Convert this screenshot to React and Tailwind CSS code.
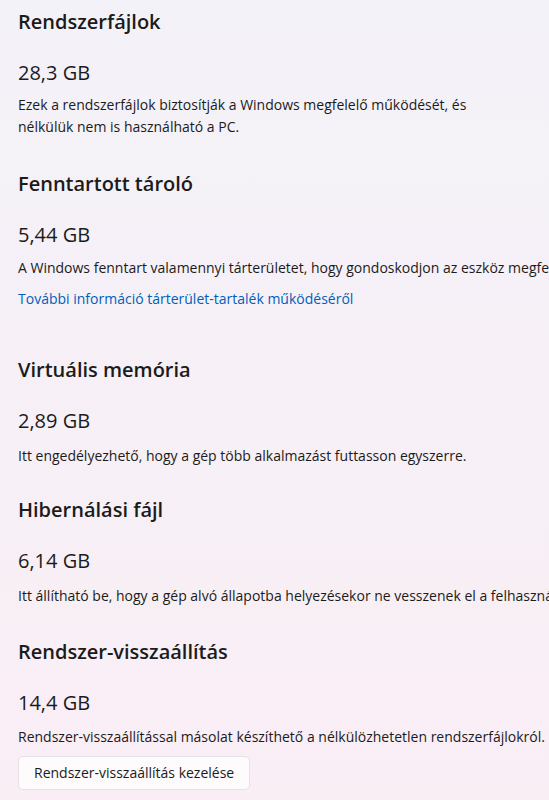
const font = { fontFamily: '"Open Sans", "Noto Sans", sans-serif' };

const Section = ({ title, size, children, className = "", gap = "mt-[7px]" }) => (
  <section className={className}>
    <h2 className="text-[20px] font-semibold leading-[28px] text-[#1b1b1b]">
      {title}
    </h2>
    <p className="mt-[23px] text-[20px] leading-[28px] text-[#1b1b1b]">{size}</p>
    <div className={`${gap} text-[14px] leading-[22px] text-[#1b1b1b]`}>
      {children}
    </div>
  </section>
);

const App = () => {
  return (
    <div
      className="w-[549px] h-[800px] overflow-hidden bg-gradient-to-b from-[#f3f2f8] to-[#faeef5] pl-[18px]"
      style={font}
    >
      <div className="pt-[8px] whitespace-nowrap">
        <Section title="Rendszerfájlok" size="28,3 GB">
          <p>
            Ezek a rendszerfájlok biztosítják a Windows megfelelő működését, és
            <br />
            nélkülük nem is használható a PC.
          </p>
        </Section>

        <Section title="Fenntartott tároló" size="5,44 GB" className="mt-[32px]" gap="mt-[8px]">
          <p>
            A Windows fenntart valamennyi tárterületet, hogy gondoskodjon az eszköz megfelelő teljesítményéről és a frissítésekről.
          </p>
          <a className="mt-[9px] block text-[#005fb8]">
            További információ tárterület-tartalék működéséről
          </a>
        </Section>

        <Section title="Virtuális memória" size="2,89 GB" className="mt-[46px]" gap="mt-[10px]">
          <p>Itt engedélyezhető, hogy a gép több alkalmazást futtasson egyszerre.</p>
        </Section>

        <Section title="Hibernálási fájl" size="6,14 GB" className="mt-[29px]" gap="mt-[10px]">
          <p>
            Itt állítható be, hogy a gép alvó állapotba helyezésekor ne vesszenek el a felhasználó adatai.
          </p>
        </Section>

        <Section title="Rendszer-visszaállítás" size="14,4 GB" className="mt-[31px]" gap="mt-[9px]">
          <p>
            Rendszer-visszaállítással másolat készíthető a nélkülözhetetlen rendszerfájlokról.
          </p>
          <button className="mt-[8px] h-[34px] px-[15px] rounded-[5px] border border-[#e6e1e4] bg-[#fdfbfc] text-[14px] text-[#1b1b1b]">
            Rendszer-visszaállítás kezelése
          </button>
        </Section>
      </div>
    </div>
  );
};

export default App;
